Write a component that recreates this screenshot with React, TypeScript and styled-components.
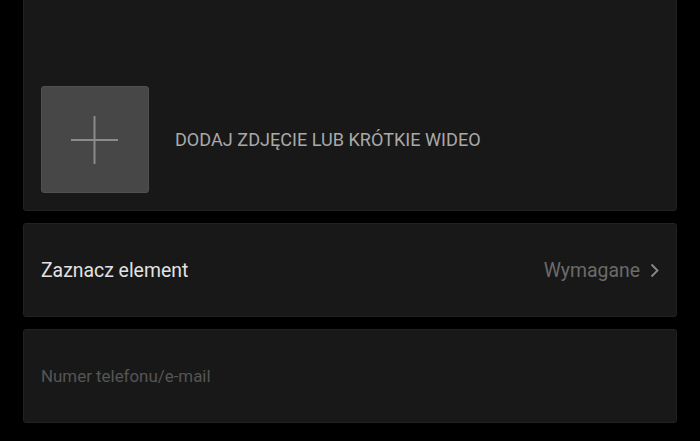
import React from "react";
import styled, { createGlobalStyle } from "styled-components";

const Global = createGlobalStyle`
  html, body { margin: 0; padding: 0; background: #000; }
  body { font-family: Roboto, "Noto Sans", sans-serif; -webkit-font-smoothing: antialiased; }
  #root { overflow: hidden; height: 441px; }
`;

const Page = styled.div`
  display: flex;
  flex-direction: column;
  gap: 12px;
  padding: 0 23px;
  height: 441px;
  overflow: hidden;
  box-sizing: border-box;
`;

const Card = styled.div<{ $h: number; $cutTop?: boolean }>`
  box-sizing: border-box;
  height: ${(p) => p.$h}px;
  background: #181818;
  border: 1px solid #222;
  border-radius: 3px;
  margin-top: ${(p) => (p.$cutTop ? "-10px" : "0")};
  flex-shrink: 0;
`;

const MediaCard = styled(Card)`
  display: flex;
  align-items: flex-end;
  padding: 0 17px 17px;
`;

const MediaRow = styled.div`
  display: flex;
  align-items: center;
  gap: 26px;
`;

const AddBox = styled.div`
  box-sizing: border-box;
  width: 108px;
  height: 107px;
  background: #474747;
  border: 1px solid #505050;
  border-radius: 3px;
  display: flex;
  align-items: center;
  justify-content: center;
`;

const MediaLabel = styled.span`
  font-size: 18.1px;
  color: #a9a9a9;
`;

const RowCard = styled(Card)`
  display: flex;
  align-items: center;
  justify-content: space-between;
  padding: 0 17px;
`;

const RowLabel = styled.span`
  font-size: 19.4px;
  color: #e2e2e2;
`;

const RowValue = styled.span`
  display: flex;
  align-items: center;
  gap: 10px;
  font-size: 19.4px;
  color: #6b6b6b;
`;

const Placeholder = styled.span`
  font-size: 16.9px;
  color: #555;
`;

export default function App() {
  return (
    <>
      <Global />
      <Page>
        <MediaCard $h={221} $cutTop>
          <MediaRow>
            <AddBox>
              <svg width="48" height="48" viewBox="0 0 48 48">
                <line x1="23.5" y1="0" x2="23.5" y2="48" stroke="#8b8b8b" strokeWidth="2" />
                <line x1="0" y1="24" x2="47" y2="24" stroke="#8b8b8b" strokeWidth="2" />
              </svg>
            </AddBox>
            <MediaLabel>DODAJ ZDJĘCIE LUB KRÓTKIE WIDEO</MediaLabel>
          </MediaRow>
        </MediaCard>
        <RowCard $h={94}>
          <RowLabel>Zaznacz element</RowLabel>
          <RowValue>
            Wymagane
            <svg width="9" height="15" viewBox="0 0 9 15">
              <polyline points="1.5,1.5 7.5,7.5 1.5,13.5" fill="none" stroke="#8a8a8a" strokeWidth="1.8" />
            </svg>
          </RowValue>
        </RowCard>
        <RowCard $h={94}>
          <Placeholder>Numer telefonu/e-mail</Placeholder>
        </RowCard>
      </Page>
    </>
  );
}
